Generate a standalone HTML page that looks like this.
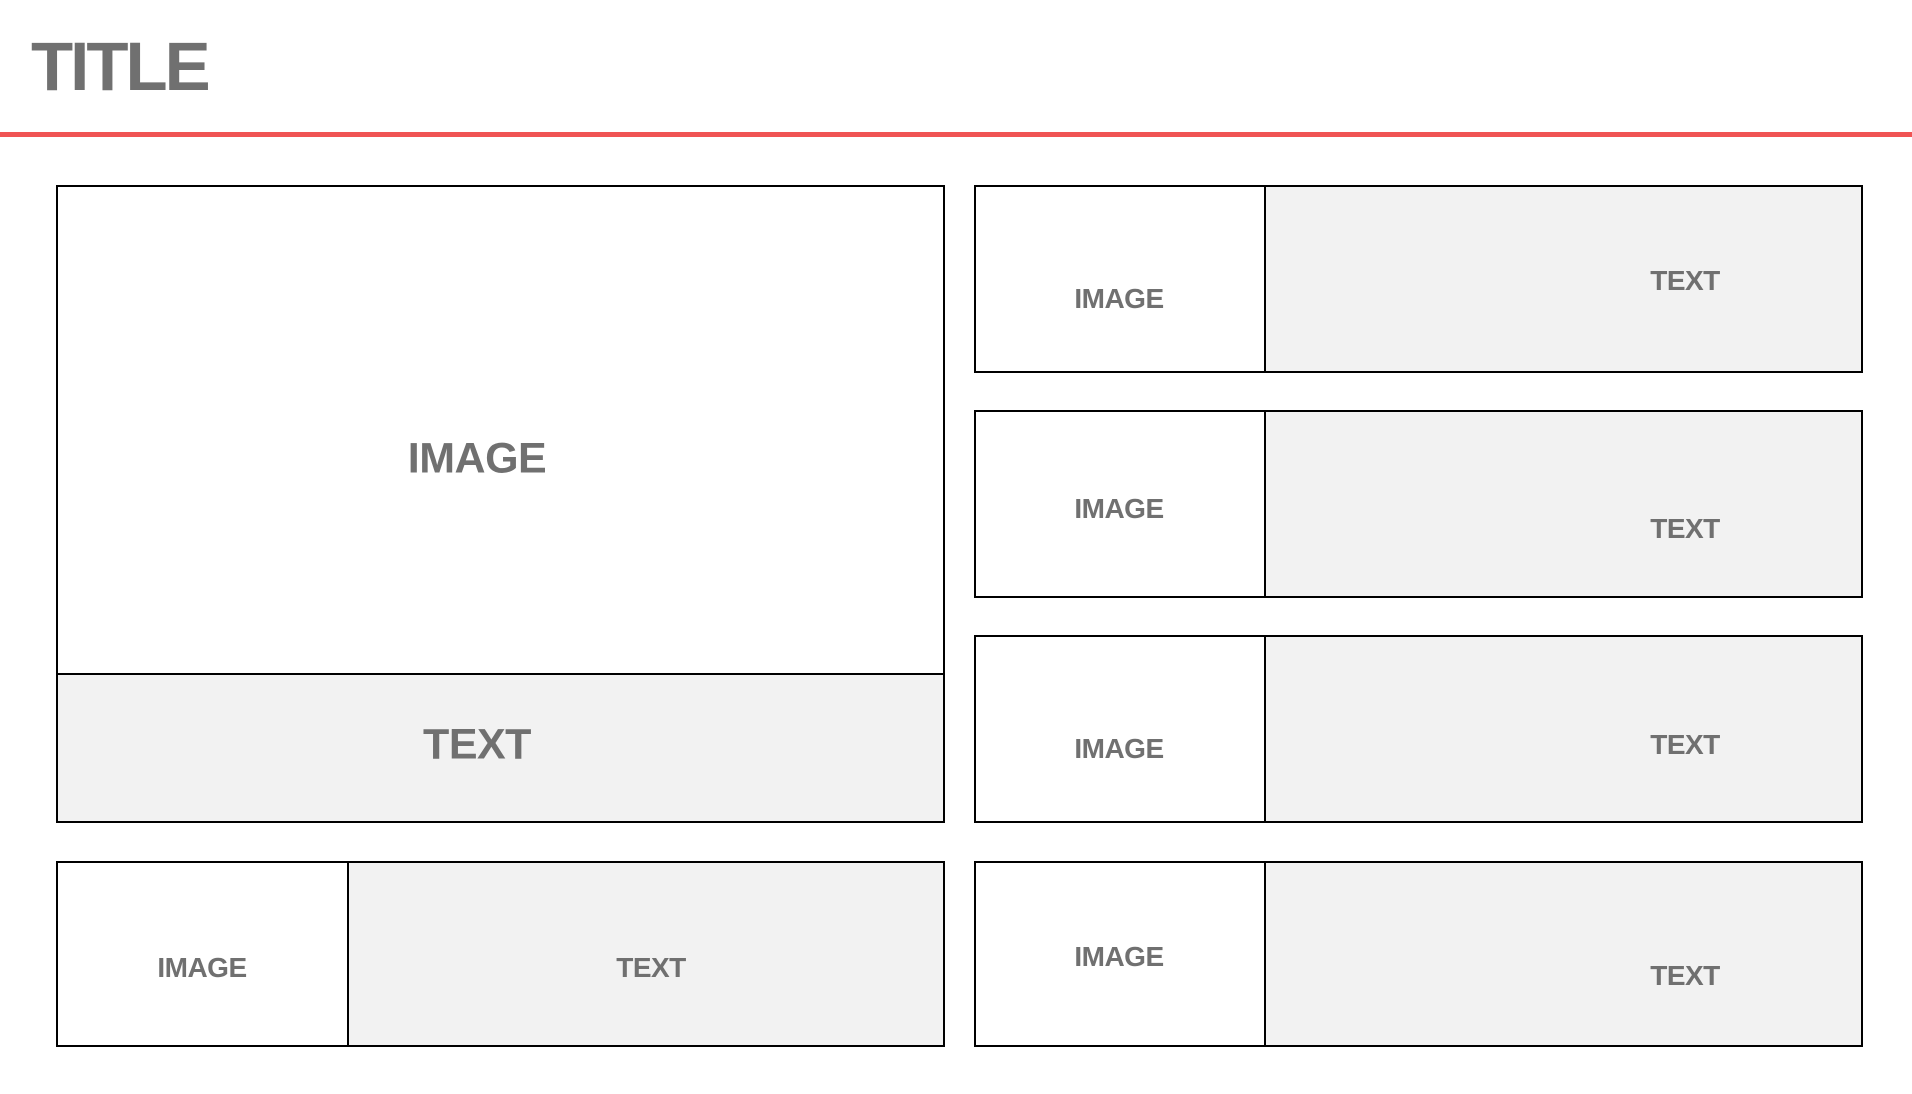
<!DOCTYPE html>
<html><head><meta charset="utf-8"><style>
body{margin:0;width:1912px;height:1094px;background:#fff;position:relative;overflow:hidden;font-family:"Liberation Sans",sans-serif;}
.b{position:absolute;border:2px solid #000;box-sizing:border-box;background:#fff;}
.g{position:absolute;background:#f2f2f2;box-sizing:border-box;}
.t{position:absolute;transform:translate(-50%,-50%);color:#707070;font-weight:bold;line-height:1;white-space:nowrap;}
.s{font-size:28px;letter-spacing:-0.5px}
.l{font-size:43px;letter-spacing:-0.5px}
</style></head><body>
<div style="position:absolute;left:31px;top:32px;font-size:69px;font-weight:bold;color:#707070;letter-spacing:-3px;line-height:1;">TITLE</div>
<div style="position:absolute;left:0;top:132px;width:1912px;height:5px;background:#f05454"></div>

<!-- big box -->
<div class="b" style="left:56px;top:185px;width:889px;height:638px"></div>
<div class="g" style="left:58px;top:673px;width:885px;height:148px;border-top:2px solid #000"></div>
<div class="t l" style="left:477px;top:459px">IMAGE</div>
<div class="t l" style="left:477px;top:745px">TEXT</div>

<!-- bottom left -->
<div class="b" style="left:56px;top:861px;width:889px;height:186px"></div>
<div class="g" style="left:347px;top:863px;width:596px;height:182px;border-left:2px solid #000"></div>
<div class="t s" style="left:202px;top:968px">IMAGE</div>
<div class="t s" style="left:651px;top:968px">TEXT</div>

<!-- right rows -->
<div class="b" style="left:974px;top:185px;width:889px;height:188px"></div>
<div class="g" style="left:1264px;top:187px;width:597px;height:184px;border-left:2px solid #000"></div>
<div class="t s" style="left:1119px;top:299px">IMAGE</div>
<div class="t s" style="left:1685px;top:281px">TEXT</div>

<div class="b" style="left:974px;top:410px;width:889px;height:188px"></div>
<div class="g" style="left:1264px;top:412px;width:597px;height:184px;border-left:2px solid #000"></div>
<div class="t s" style="left:1119px;top:509px">IMAGE</div>
<div class="t s" style="left:1685px;top:529px">TEXT</div>

<div class="b" style="left:974px;top:635px;width:889px;height:188px"></div>
<div class="g" style="left:1264px;top:637px;width:597px;height:184px;border-left:2px solid #000"></div>
<div class="t s" style="left:1119px;top:749px">IMAGE</div>
<div class="t s" style="left:1685px;top:745px">TEXT</div>

<div class="b" style="left:974px;top:861px;width:889px;height:186px"></div>
<div class="g" style="left:1264px;top:863px;width:597px;height:182px;border-left:2px solid #000"></div>
<div class="t s" style="left:1119px;top:957px">IMAGE</div>
<div class="t s" style="left:1685px;top:976px">TEXT</div>
</body></html>
